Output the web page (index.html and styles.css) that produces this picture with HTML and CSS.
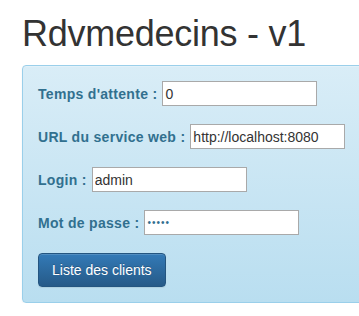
FILE: index.html
```
<!DOCTYPE html>
<html>
<head>
	<meta charset="utf-8">
	<title>Rdvmedecins - v1</title>
	<link rel="stylesheet" href="styles.css">
</head>
<body>
<div class="container">
	<h1 class="title">Rdvmedecins - v1</h1>
	<div class="alert-info">
		<div class="row">
			<label for="attente">Temps d'attente :</label>
			<input type="text" id="attente" value="0">
		</div>
		<div class="row">
			<label for="url">URL du service web :</label>
			<input type="text" id="url" value="http://localhost:8080">
		</div>
		<div class="row">
			<label for="login">Login :</label>
			<input type="text" id="login" value="admin">
		</div>
		<div class="row">
			<label for="mdp">Mot de passe :</label>
			<input type="password" id="mdp" class="pass" value="admin">
		</div>
		<div class="row">
			<button class="btn-primary">Liste des clients</button>
		</div>
	</div>
</div>
</body>
</html>
```

FILE: styles.css
```
html{
	overflow: hidden;
}
body{
	margin: 0;
	font-family: "Liberation Sans", Arial, sans-serif;
	font-size: 14px;
	line-height: 20px;
	color: #333;
	overflow: hidden;
}
.container{
	padding: 0 0 0 22px;
	overflow: hidden;
}
.title{
	margin: 14px 0 11px;
	font-size: 36px;
	font-weight: normal;
	line-height: 40px;
	letter-spacing: -0.25px;
}
.alert-info{
	display: flex;
	flex-direction: column;
	gap: 18px;
	width: 400px;
	padding: 15px;
	border: 1px solid #9acfea;
	border-radius: 4px;
	background: linear-gradient(to bottom, #d9edf7 0, #b9def0 100%);
	box-shadow: inset 0 1px 0 rgba(255,255,255,.25), 0 1px 2px rgba(0,0,0,.05);
	color: #31708f;
}
.row{
	display: flex;
	align-items: center;
	height: 25px;
}
.row label{
	font-weight: bold;
	margin-right: 5px;
	letter-spacing: 0.3px;
	white-space: nowrap;
}
.row input{
	box-sizing: border-box;
	width: 155px;
	height: 25px;
	padding: 1px 2px;
	border: 1px solid #a9a9a9;
	background: #fff;
	font-family: "Liberation Sans", Arial, sans-serif;
	font-size: 14px;
	color: #333;
	outline: none;
}
.row .pass{
	font-size: 10px;
	letter-spacing: 1px;
	color: #31708f;
}
.row:last-child{
	height: 34px;
}
.btn-primary{
	height: 34px;
	padding: 6px 13px;
	border: 1px solid #245580;
	border-radius: 4px;
	background: linear-gradient(to bottom, #337ab7 0, #265a88 100%);
	color: #fff;
	font-family: "Liberation Sans", Arial, sans-serif;
	font-size: 14px;
	line-height: 20px;
	text-shadow: 0 -1px 0 rgba(0,0,0,.2);
	box-shadow: inset 0 1px 0 rgba(255,255,255,.15), 0 1px 1px rgba(0,0,0,.075);
	cursor: pointer;
}
```
